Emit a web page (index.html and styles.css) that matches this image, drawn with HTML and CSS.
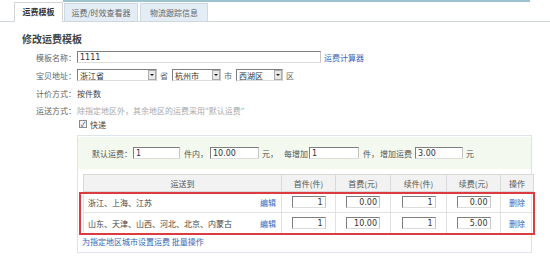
FILE: index.html
```html
<!DOCTYPE html>
<html>
<head>
  <meta charset="utf-8">
  <title>修改运费模板</title>
  <link rel="stylesheet" href="styles.css">
</head>
<body>

  <div class="topline"></div>
  <div class="tabs">
    <a class="tab tab-1 active">运费模板</a>
    <a class="tab tab-2">运费/时效查看器</a>
    <a class="tab tab-3">物流跟踪信息</a>
  </div>

  <div class="main">
    <h2>修改运费模板</h2>

    <div class="row">
      <span class="label">模板名称：</span>
      <input type="text" class="txt txt-name" value="1111">
      <a class="link calc">运费计算器</a>
    </div>

    <div class="row">
      <span class="label">宝贝地址：</span>
      <div class="sel sel-prov"><span class="sel-text">浙江省</span><i class="arrow"></i></div>
      <span class="unit">省</span>
      <div class="sel sel-city"><span class="sel-text">杭州市</span><i class="arrow"></i></div>
      <span class="unit">市</span>
      <div class="sel sel-area"><span class="sel-text">西湖区</span><i class="arrow"></i></div>
      <span class="unit">区</span>
    </div>

    <div class="row">
      <span class="label">计价方式：</span>
      <span class="value">按件数</span>
    </div>

    <div class="row row-way">
      <span class="label">运送方式：</span>
      <span class="tip">除指定地区外，其余地区的运费采用"默认运费"</span>
    </div>

    <div class="check-row">
      <span class="checkbox">✓</span>
      <span class="value">快递</span>
    </div>

    <div class="box">
      <div class="default-fee">
        <span>默认运费：</span>
        <input type="text" class="txt fee fee-1" value="1">
        <span>件内，</span>
        <input type="text" class="txt fee fee-2" value="10.00">
        <span>元，</span>
        <span class="gap">每增加</span>
        <input type="text" class="txt fee fee-3" value="1">
        <span>件，</span>
        <span class="gap-s">增加运费</span>
        <input type="text" class="txt fee fee-4" value="3.00">
        <span>元</span>
      </div>

      <table class="fee-table">
        <thead>
          <tr>
            <th class="c-area">运送到</th>
            <th class="c-num">首件(件)</th>
            <th class="c-num2">首费(元)</th>
            <th class="c-num3">续件(件)</th>
            <th class="c-num">续费(元)</th>
            <th class="c-op">操作</th>
          </tr>
        </thead>
        <tbody>
          <tr>
            <td class="c-area"><div class="area"><span>浙江、上海、江苏</span><a class="link">编辑</a></div></td>
            <td><input type="text" class="txt cell" value="1"></td>
            <td><input type="text" class="txt cell" value="0.00"></td>
            <td><input type="text" class="txt cell" value="1"></td>
            <td><input type="text" class="txt cell" value="0.00"></td>
            <td class="c-op"><a class="link">删除</a></td>
          </tr>
          <tr>
            <td class="c-area"><div class="area"><span>山东、天津、山西、河北、北京、内蒙古</span><a class="link">编辑</a></div></td>
            <td><input type="text" class="txt cell" value="1"></td>
            <td><input type="text" class="txt cell" value="10.00"></td>
            <td><input type="text" class="txt cell" value="1"></td>
            <td><input type="text" class="txt cell" value="5.00"></td>
            <td class="c-op"><a class="link">删除</a></td>
          </tr>
        </tbody>
      </table>

      <div class="box-links">
        <a class="link">为指定地区城市设置运费</a>
        <a class="link">批量操作</a>
      </div>

      <!-- red annotation frame over the two rows -->
      <div class="mark"></div>
    </div>
  </div>

</body>
</html>
```

FILE: styles.css
```css
body {
  margin: 0;
  background: #fff;
  color: #444;
  font-family: "Noto Sans CJK SC", "Liberation Sans", sans-serif;
  font-size: 8px;
}

a {
  text-decoration: none;
  cursor: pointer;
}

.link {
  color: #3567b8;
}

/* tabs */
.topline {
  height: 2px;
  width: 467px;
  margin-left: 63px;
  background: #9cc3cf;
}

.tabs {
  display: flex;
  align-items: flex-end;
  height: 19px;
  padding-left: 14px;
  border-bottom: 1px solid #cfd6dc;
}

.tab {
  height: 18px;
  line-height: 18px;
  text-align: center;
  color: #666;
  background: #e4edf6;
  border: 1px solid #cdd9e4;
  border-bottom: none;
  box-sizing: border-box;
  margin-right: 1px;
}

.tab-1 { width: 49px; }
.tab-2 { width: 74px; margin-right: 2px; }
.tab-3 { width: 68px; }

.tab.active {
  height: 20px;
  margin-bottom: -1px;
  background: #fff;
  color: #333;
  font-weight: bold;
  border-color: #d6d6d6;
}

/* form */
.main {
  padding-left: 22px;
}

h2 {
  margin: 8px 0 0;
  height: 18px;
  line-height: 18px;
  font-size: 10px;
  font-weight: bold;
  color: #444;
}

.row {
  display: flex;
  align-items: center;
  height: 18px;
}

.row-way {
  height: 16px;
}

.label {
  width: 55px;
  padding-left: 14px;
  box-sizing: border-box;
  color: #666;
  white-space: nowrap;
}

.value {
  color: #444;
}

.tip {
  color: #aaa;
}

.txt {
  height: 12px;
  box-sizing: border-box;
  padding: 0 2px;
  border: 1px solid;
  border-color: #7f7f7f #c6c6c6 #dcdcdc #7f7f7f;
  background: #fff;
  color: #333;
  font-family: "DejaVu Sans", "Liberation Sans", sans-serif;
  font-size: 8px;
  outline: none;
}

.txt-name {
  width: 244px;
}

.calc {
  margin-left: 3px;
}

.sel {
  display: flex;
  align-items: center;
  height: 12px;
  box-sizing: border-box;
  border: 1px solid;
  border-color: #7f7f7f #c6c6c6 #dcdcdc #7f7f7f;
  background: #fff;
  color: #333;
}

.sel-text {
  flex: 1;
  padding-left: 2px;
}

.sel-prov { width: 80px; }
.sel-city { width: 49px; }
.sel-area { width: 47px; }

.arrow {
  width: 8px;
  height: 10px;
  box-sizing: border-box;
  border: 1px solid #aaa;
  background: #e8e8e8;
  display: flex;
  align-items: center;
  justify-content: center;
}

.arrow::after {
  content: "";
  border-left: 2px solid transparent;
  border-right: 2px solid transparent;
  border-top: 2px solid #222;
}

.unit {
  margin: 0 4px 0 3px;
  color: #666;
}

.check-row {
  display: flex;
  align-items: center;
  height: 12px;
  padding-left: 57px;
}

.checkbox {
  width: 8px;
  height: 8px;
  box-sizing: border-box;
  border: 1px solid #8c8c8c;
  margin-right: 3px;
  font-size: 7px;
  line-height: 6px;
  text-align: center;
  color: #2a4c8a;
  background: #f4f4f4;
}

/* fee box */
.box {
  position: relative;
  margin: 5px 0 0 55px;
  width: 455px;
  box-sizing: border-box;
  border: 1px solid #dde3e8;
  padding: 1px 0 2px;
}

.default-fee {
  display: flex;
  align-items: center;
  height: 32px;
  padding-left: 14px;
  background: #f3f9ee;
  color: #555;
}

.fee {
  width: 47px;
  margin: 0 4px 0 1px;
}

.fee-2 { width: 49px; margin-left: 2px; margin-right: 3px; }
.fee-3 { width: 50px; }
.fee-4 { width: 48px; margin-left: 3px; margin-right: 3px; }

.gap { margin-left: 6px; }
.gap-s { margin-left: 1px; }

.fee-table {
  margin: 5px 0 0 5px;
  width: 444px;
  border-collapse: collapse;
  table-layout: fixed;
}

.fee-table th,
.fee-table td {
  padding: 0;
}

.fee-table th {
  height: 16px;
  background: #f2f2f2;
  font-weight: normal;
  color: #555;
  border: 1px solid #d9d9d9;
}

.fee-table td {
  height: 20px;
  border: 1px solid #e2e2e2;
  text-align: center;
  color: #444;
}

.fee-table .c-area { width: 197px; }
.fee-table .c-num { width: 53px; }
.fee-table .c-num2 { width: 54px; }
.fee-table .c-num3 { width: 55px; }
.fee-table .c-op { width: 32px; }

.area {
  display: flex;
  justify-content: space-between;
  padding: 0 5px 0 4px;
  text-align: left;
}

.cell {
  display: block;
  margin: 0 auto;
  width: 34px;
  text-align: right;
}

.box-links {
  height: 16px;
  line-height: 16px;
  padding-left: 4px;
}

.mark {
  position: absolute;
  left: 1px;
  top: 56px;
  width: 456px;
  height: 43px;
  box-sizing: border-box;
  border: 2px solid #dc3b40;
}
```
